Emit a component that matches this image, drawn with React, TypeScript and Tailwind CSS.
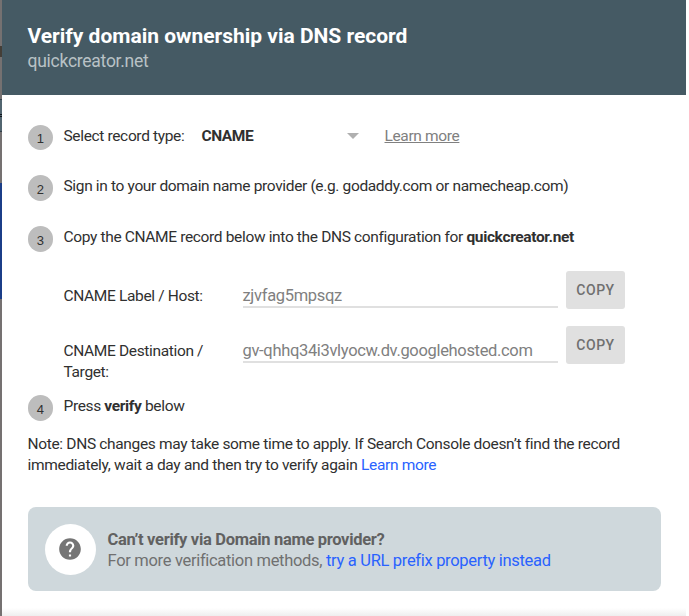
import type { ReactNode } from "react";

function Step({ n, className, children }: { n: number; className: string; children: ReactNode }) {
  return (
    <div className={`flex items-start ${className}`}>
      <span className="flex h-[25.5px] w-[25.5px] shrink-0 items-center justify-center rounded-full bg-[#bdbdbd] pt-[3px] font-['Liberation_Sans',sans-serif] text-[13px] leading-none tracking-normal">
        {n}
      </span>
      <div className="ml-[10.5px] h-[21px] whitespace-nowrap">{children}</div>
    </div>
  );
}

function RecordRow({ label, value, className }: { label: ReactNode; value: string; className: string }) {
  return (
    <div className={`flex items-start pl-9 ${className}`}>
      <div className="w-[179px] pt-[15px] whitespace-nowrap">{label}</div>
      <div className="mt-[13px] h-[24px] w-[315px] border-b-2 border-[#e0e0e0] pt-px text-[16.5px] tracking-[-0.33px] text-[#808080]">
        {value}
      </div>
      <button className="ml-[8.5px] flex h-[38px] w-[59px] items-center justify-center rounded-[3px] bg-[#e0e0e0] text-[14px] font-medium tracking-[0.5px] text-[#707070]">
        COPY
      </button>
    </div>
  );
}

export default function App() {
  return (
    <div className="flex h-[616px] w-[689px] overflow-hidden bg-white font-[Roboto,sans-serif] text-[15.5px] leading-[21px] tracking-[-0.35px] text-[#303030]">
      <div className="flex w-[2px] shrink-0 flex-col bg-[#757171]">
        <div className="mt-[46px] h-[11px] bg-[#443e37]" />
        <div className="mt-[42px] h-[15px] border-t border-[#32404a] bg-[#526570]" />
        <div className="h-px bg-[#10151c]" />
        <div className="h-px bg-[#526570]" />
        <div className="h-px bg-[#10151c]" />
        <div className="h-[15px] border-b border-[#32404a] bg-[#526570]" />
        <div className="mt-[51px] h-[116px] bg-[#1b3e88]" />
      </div>
      <main className="flex w-[684px] shrink-0 flex-col">
        <header className="h-[95px] bg-[#455a64] pt-[23px] pl-[25.5px]">
          <h1 className="h-[27px] text-[21px] leading-[27px] font-bold tracking-[-0.01px] whitespace-nowrap text-white">
            Verify domain ownership via DNS record
          </h1>
          <p className="text-[17.5px] leading-[23px] tracking-[-0.26px] text-[#b9c2c6]">quickcreator.net</p>
        </header>
        <section className="flex flex-1 flex-col pt-[29.5px]">
          <div className="flex flex-col pl-[25.5px]">
            <Step n={1} className="h-[50.5px]">
              <div className="flex pt-px">
                <span className="w-[138px]">Select record type:</span>
                <span className="w-[145px] font-bold tracking-[-0.45px]">CNAME</span>
                <svg width="12" height="6" viewBox="0 0 12 6" className="mt-[7px]">
                  <path d="M0 0h12L6 6z" fill="#b0b0b0" />
                </svg>
                <a className="ml-[26px] text-[#808080] underline underline-offset-1">Learn more</a>
              </div>
            </Step>
            <Step n={2} className="h-[51px]">
              <p className="pt-px">Sign in to your domain name provider (e.g. godaddy.com or namecheap.com)</p>
            </Step>
            <Step n={3} className="h-[45px]">
              <p className="pt-px">
                Copy the CNAME record below into the DNS configuration for <b>quickcreator.net</b>
              </p>
            </Step>
            <RecordRow className="h-[55px]" label="CNAME Label / Host:" value="zjvfag5mpsqz" />
            <RecordRow
              className="h-[69px]"
              label={<>CNAME Destination /<br />Target:</>}
              value="gv-qhhq34i3vlyocw.dv.googlehosted.com"
            />
            <Step n={4} className="h-[38px]">
              <p className="pt-px">Press <b>verify</b> below</p>
            </Step>
            <p className="h-[74px] pt-px tracking-[-0.33px] whitespace-nowrap">
              Note: DNS changes may take some time to apply. If Search Console doesn’t find the record
              <br />
              <span className="tracking-[-0.31px]">
                immediately, wait a day and then try to verify again <a className="text-[#2962ff]">Learn more</a>
              </span>
            </p>
            <aside className="flex h-[84px] w-[633.5px] shrink-0 items-center rounded-lg bg-[#cfd8dc] pl-[17px] text-[#616161]">
              <div className="flex h-[51px] w-[51px] items-center justify-center rounded-full bg-white">
                <svg width="26" height="26" viewBox="0 0 24 24" fill="#757575">
                  <path d="M12 2C6.48 2 2 6.48 2 12s4.48 10 10 10 10-4.48 10-10S17.52 2 12 2zm1 17h-2v-2h2v2zm2.07-7.75-.9.92C13.45 12.9 13 13.5 13 15h-2v-.5c0-1.1.45-2.1 1.17-2.83l1.24-1.26c.37-.36.59-.86.59-1.41 0-1.1-.9-2-2-2s-2 .9-2 2H8c0-2.21 1.79-4 4-4s4 1.79 4 4c0 .88-.36 1.68-.93 2.25z" />
                </svg>
              </div>
              <div className="ml-3 pt-[2px] text-[16.5px] leading-[21px] tracking-[-0.31px] whitespace-nowrap">
                <b>Can’t verify via Domain name provider?</b>
                <p className="text-[#707070]">For more verification methods, <a className="text-[#2962ff]">try a URL prefix property instead</a></p>
              </div>
            </aside>
          </div>
          <div className="mt-auto h-[8px] bg-gradient-to-b from-white to-[#eeeeee]" />
        </section>
      </main>
    </div>
  );
}
